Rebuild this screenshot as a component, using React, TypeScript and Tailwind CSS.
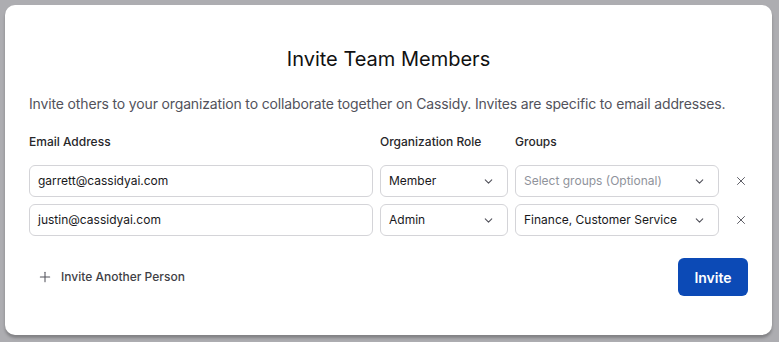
import React from "react";

const Chevron = () => (
  <svg width="13" height="13" viewBox="0 0 24 24" fill="none" stroke="#52525b" strokeWidth="2" strokeLinecap="round" strokeLinejoin="round">
    <path d="m6 9 6 6 6-6" />
  </svg>
);

const XIcon = () => (
  <svg width="14" height="14" viewBox="0 0 24 24" fill="none" stroke="#52525b" strokeWidth="1.6" strokeLinecap="round" strokeLinejoin="round">
    <path d="M18 6 6 18" />
    <path d="m6 6 12 12" />
  </svg>
);

const Select = ({ value, placeholder }: { value?: string; placeholder?: string }) => (
  <div className="flex h-[32px] items-center justify-between rounded-[6px] border border-[#d4d4d8] bg-white pl-[8px] pr-[12px]">
    <span className={value ? "text-[12px] text-[#18181b]" : "text-[12px] text-[#8f939b]"}>{value ?? placeholder}</span>
    <Chevron />
  </div>
);

const Input = ({ value }: { value: string }) => (
  <div className="flex h-[32px] items-center rounded-[6px] border border-[#d4d4d8] bg-white px-[8px] text-[12px] text-[#18181b]">
    {value}
  </div>
);

export default function App() {
  return (
    <div className="min-h-[342px] w-[779px] bg-[#adadb1] p-[5px]" style={{ fontFamily: "Inter, 'Noto Sans', sans-serif" }}>
      <div className="h-[330px] w-[767px] rounded-[10px] bg-white px-[24px] pt-[42px] shadow-[0_3px_3px_rgba(0,0,0,0.25)]">
        <h1 className="text-center text-[20px] font-normal leading-[24px] text-[#111111]">Invite Team Members</h1>
        <p className="mt-[23px] text-[14px] leading-[20px] tracking-[-0.15px] text-[#52525b]">
          Invite others to your organization to collaborate together on Cassidy. Invites are specific to email addresses.
        </p>
        <div className="mt-[18px] grid grid-cols-[344px_128px_204px_30px] gap-x-[7px] gap-y-[7px]">
          <div className="mb-[6px] text-[12px] font-medium leading-[20px] text-[#27272a]">Email Address</div>
          <div className="mb-[6px] text-[12px] font-medium leading-[20px] text-[#27272a]">Organization Role</div>
          <div className="mb-[6px] text-[12px] font-medium leading-[20px] text-[#27272a]">Groups</div>
          <div />

          <Input value="garrett@cassidyai.com" />
          <Select value="Member" />
          <Select placeholder="Select groups (Optional)" />
          <div className="flex items-center justify-center"><XIcon /></div>

          <Input value="justin@cassidyai.com" />
          <Select value="Admin" />
          <Select value="Finance, Customer Service" />
          <div className="flex items-center justify-center"><XIcon /></div>
        </div>
        <div className="mt-[22px] flex items-center justify-between">
          <div className="flex items-center gap-[9px] pl-[9px] text-[12px] font-medium text-[#3f3f46]">
            <svg width="14" height="14" viewBox="0 0 24 24" fill="none" stroke="#52525b" strokeWidth="1.8" strokeLinecap="round">
              <path d="M12 4v16" />
              <path d="M4 12h16" />
            </svg>
            Invite Another Person
          </div>
          <button className="h-[38px] w-[70px] rounded-[6px] bg-[#0c4ab6] text-[14px] font-semibold text-white">Invite</button>
        </div>
      </div>
    </div>
  );
}
